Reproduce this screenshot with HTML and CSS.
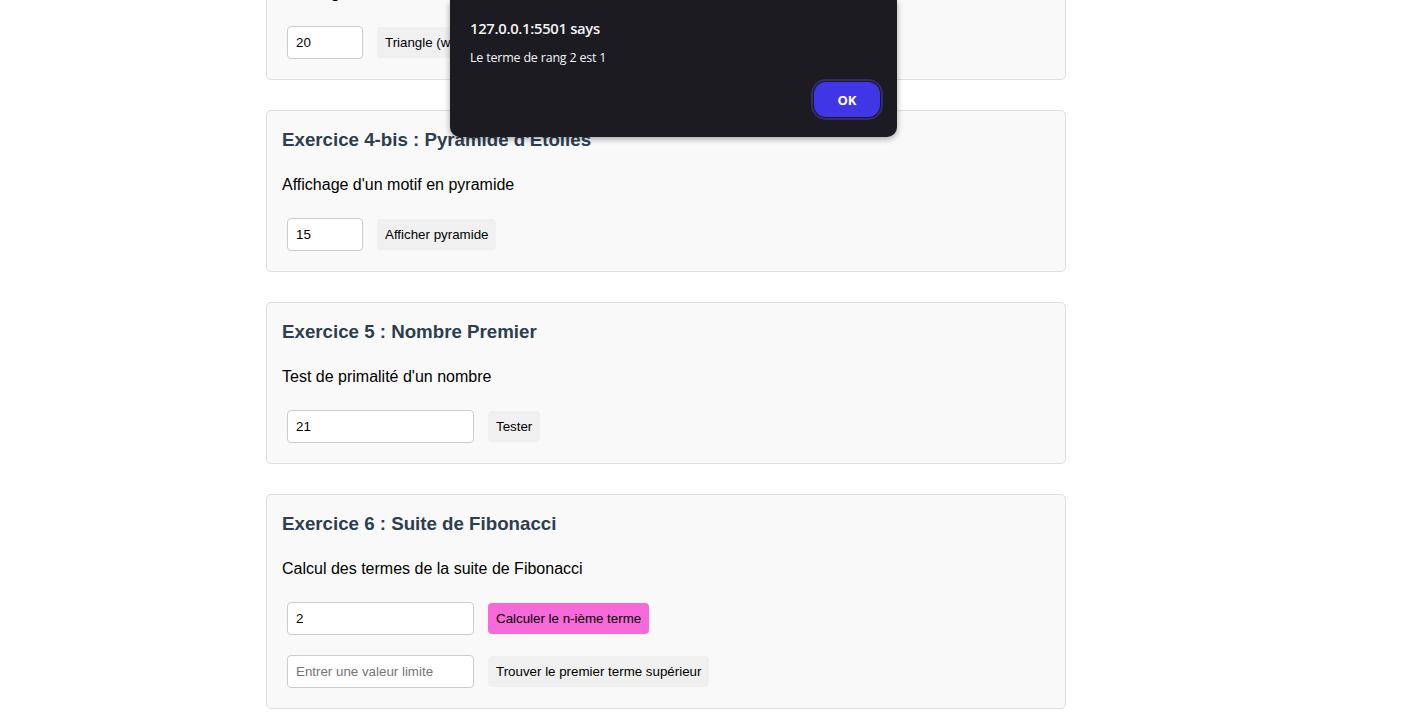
FILE: index.html
```html
<!DOCTYPE html>
<html lang="fr">
<head>
<meta charset="utf-8">
<title>Exercices JavaScript</title>
<link rel="stylesheet" href="styles.css">
</head>
<body>
<main class="page">
  <section class="card">
    <h3>Exercice 4 : Triangle d'Etoiles</h3>
    <p>Affichage d'un motif en triangle</p>
    <div class="row">
      <input class="in-small" type="text" value="20">
      <button class="btn">Triangle (while)</button>
      <button class="btn">Triangle (for)</button>
    </div>
  </section>

  <section class="card">
    <h3>Exercice 4-bis : Pyramide d'Etoiles</h3>
    <p>Affichage d'un motif en pyramide</p>
    <div class="row">
      <input class="in-small" type="text" value="15">
      <button class="btn">Afficher pyramide</button>
    </div>
  </section>

  <section class="card">
    <h3>Exercice 5 : Nombre Premier</h3>
    <p>Test de primalité d'un nombre</p>
    <div class="row">
      <input class="in-wide" type="text" value="21">
      <button class="btn">Tester</button>
    </div>
  </section>

  <section class="card">
    <h3>Exercice 6 : Suite de Fibonacci</h3>
    <p>Calcul des termes de la suite de Fibonacci</p>
    <div class="row">
      <input class="in-wide" type="text" value="2">
      <button class="btn btn-active">Calculer le n-ième terme</button>
    </div>
    <div class="row">
      <input class="in-wide" type="text" placeholder="Entrer une valeur limite">
      <button class="btn">Trouver le premier terme supérieur</button>
    </div>
  </section>
</main>

<div class="alert" role="alertdialog">
  <div class="alert-title">127.0.0.1:5501 says</div>
  <div class="alert-msg">Le terme de rang 2 est 1</div>
  <div class="alert-actions">
    <button class="alert-ok">OK</button>
  </div>
</div>
</body>
</html>
```

FILE: styles.css
```css
html, body {
  margin: 0;
  padding: 0;
  background: #ffffff;
  overflow: hidden;
}

body {
  font-family: "Liberation Sans", Arial, sans-serif;
  color: #000;
}

.page {
  width: 800px;
  margin: -82px 0 0 266px;
  display: flex;
  flex-direction: column;
  gap: 30px;
}

.card {
  box-sizing: border-box;
  width: 800px;
  background: #f9f9f9;
  border: 1px solid #dddddd;
  border-radius: 5px;
  padding: 15px;
}

.card h3 {
  margin: 2px 0 0;
  font-size: 18.72px;
  line-height: 23px;
  font-weight: bold;
  color: #2c3e50;
}

.card p {
  margin: 25px 0 0;
  font-size: 16px;
  line-height: 18px;
}

.row {
  display: flex;
  align-items: center;
  gap: 14px;
  padding: 5px;
  margin-top: 19px;
}

.row + .row {
  margin-top: 10px;
}

input {
  box-sizing: border-box;
  height: 33px;
  padding: 0 8px;
  border: 1px solid #cccccc;
  border-radius: 4px;
  background: #ffffff;
  font-family: "Liberation Sans", Arial, sans-serif;
  font-size: 13.333px;
  color: #000;
}

input::placeholder {
  color: #757575;
}

.in-small { width: 76px; }
.in-wide { width: 187px; }

.btn {
  box-sizing: border-box;
  height: 31px;
  padding: 0 8px;
  border: none;
  border-radius: 4px;
  background: #f0f0f0;
  font-family: "Liberation Sans", Arial, sans-serif;
  font-size: 13.333px;
  color: #000;
}

.btn-active {
  background: #f56ad8;
}

.alert {
  position: absolute;
  left: 450px;
  top: 0;
  box-sizing: border-box;
  width: 447px;
  height: 137px;
  background: #1c1b21;
  border-radius: 0 0 10px 10px;
  box-shadow: 0 2px 6px rgba(0, 0, 0, 0.35);
  padding: 18px 17px 0 20px;
  font-family: "Open Sans", "Noto Sans", sans-serif;
  color: #f3f3f5;
}

.alert-title {
  font-size: 14.8px;
  line-height: 20px;
  font-weight: 600;
  letter-spacing: -0.3px;
}

.alert-msg {
  margin-top: 11px;
  font-size: 12.5px;
  line-height: 17px;
  letter-spacing: -0.2px;
}

.alert-actions {
  display: flex;
  justify-content: flex-end;
  margin-top: 16px;
}

.alert-ok {
  width: 66px;
  height: 35px;
  border: none;
  border-radius: 12px;
  background: #4036e6;
  color: #ffffff;
  font-family: "Open Sans", "Noto Sans", sans-serif;
  font-weight: 700;
  font-size: 13px;
  box-shadow: 0 0 0 1px #1c1b21, 0 0 0 3px #2e2c72;
}
```
